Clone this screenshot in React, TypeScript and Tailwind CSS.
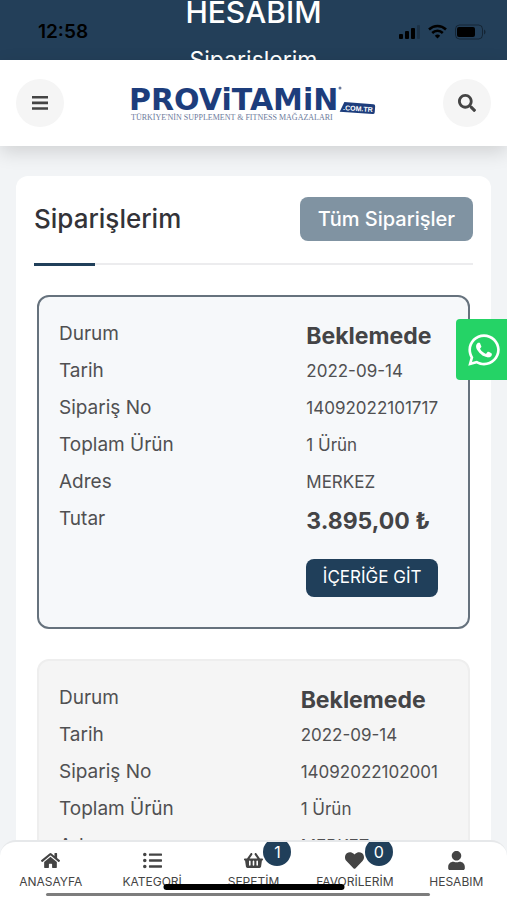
import { useState } from "react";
import { FaHeart, FaHome, FaListUl, FaSearch, FaShoppingBasket, FaUser, FaWhatsapp } from "react-icons/fa";
import type { IconType } from "react-icons";

interface Order {
  no: string;
  status: string;
  date: string;
  count: string;
  address: string;
  total: string;
  active?: boolean;
}

const ORDERS: Order[] = [
  {
    no: "14092022101717",
    status: "Beklemede",
    date: "2022-09-14",
    count: "1 Ürün",
    address: "MERKEZ",
    total: "3.895,00 ₺",
    active: true,
  },
  {
    no: "14092022102001",
    status: "Beklemede",
    date: "2022-09-14",
    count: "1 Ürün",
    address: "MERKEZ",
    total: "3.895,00 ₺",
  },
];

interface Tab {
  label: string;
  icon: IconType;
  badge?: number;
}

const TABS: Tab[] = [
  { label: "ANASAYFA", icon: FaHome },
  { label: "KATEGORİ", icon: FaListUl },
  { label: "SEPETİM", icon: FaShoppingBasket, badge: 1 },
  { label: "FAVORİLERİM", icon: FaHeart, badge: 0 },
  { label: "HESABIM", icon: FaUser },
];

function StatusBar() {
  return (
    <div className="absolute inset-x-0 top-0 flex items-center justify-between pt-5 pl-[38px] pr-[21px] text-black">
      <span className="text-[19px] leading-6 font-semibold">12:58</span>
      <div className="flex items-center gap-2">
        <svg width="21" height="16" viewBox="0 0 21 16" aria-hidden="true">
          <rect x="0" y="10" width="4" height="5" rx="1" />
          <rect x="6" y="7" width="4" height="8" rx="1" />
          <rect x="12" y="4" width="4" height="11" rx="1" />
          <rect x="18" y="1" width="3" height="14" rx="1" opacity=".2" />
        </svg>
        <svg width="19" height="16" viewBox="0 0 19 16" fill="none" stroke="currentColor" strokeWidth="2.5" aria-hidden="true">
          <path d="M1 5.500C5.800.9 13.200.9 18 5.500" />
          <path d="M4.200 9c3-2.900 7.600-2.900 10.600 0" />
          <path d="M9.500 14.500 6.800 11.800a3.900 3.900 0 0 1 5.400 0z" fill="currentColor" stroke="none" />
        </svg>
        <svg width="31" height="16" viewBox="0 0 31 16" aria-hidden="true">
          <rect x=".5" y="1" width="27" height="14" rx="4" fill="none" stroke="#000" strokeOpacity=".4" />
          <rect x="2" y="3" width="18" height="10" rx="2" />
          <path d="M29 5.500c2 .8 2 4.200 0 5z" opacity=".4" />
        </svg>
      </div>
    </div>
  );
}

function Logo() {
  return (
    <svg width="248" height="40" viewBox="0 0 248 40" role="img" aria-label="Provitamin">
      <text x="-1" y="27" fill="#1d3d7c" fontFamily="DejaVu Sans" fontWeight="700" fontSize="30">
        PROViTAMiN
      </text>
      <text x="1" y="37" fill="#6b7a9b" fontFamily="Liberation Serif" fontSize="8">
        TÜRKİYE'NİN SUPPLEMENT &amp; FITNESS MAĞAZALARI
      </text>
      <circle cx="210" cy="5" r="1.500" fill="#6b7a9b" />
      <g transform="rotate(4 227 25)">
        <path d="M214 20h29q2 0 2 2v6q0 2-2 2h-33z" fill="#1d3d7c" />
        <text x="228" y="28" fill="#fff" textAnchor="middle" fontFamily="Liberation Sans" fontWeight="700" fontSize="7">
          .COM.TR
        </text>
      </g>
    </svg>
  );
}

function OrderCard({ order }: { order: Order }) {
  const rows = [
    { label: "Durum", value: order.status, strong: true },
    { label: "Tarih", value: order.date },
    { label: "Sipariş No", value: order.no },
    { label: "Toplam Ürün", value: order.count },
    { label: "Adres", value: order.address },
    { label: "Tutar", value: order.total, strong: true },
  ];

  return (
    <article
      className={`rounded-xl pt-[18px] pb-[30px] pl-5 pr-[30px] ${
        order.active ? "border-2 border-[#66727d] bg-[#f6f8fa]" : "border-2 border-[#eeeeee] bg-[#f5f5f5]"
      }`}
    >
      <table className="w-full text-[#505052]">
        <tbody>
          {rows.map((row) => (
            <tr key={row.label} className="h-[37px]">
              <th scope="row" className="p-0 text-left text-[19px] leading-7 font-normal">
                {row.label}
              </th>
              <td
                className={`w-px p-0 whitespace-nowrap leading-7 ${
                  row.strong ? "pt-1 text-[23px] font-bold text-[#444446]" : "text-[17px]"
                }`}
              >
                {row.value}
              </td>
            </tr>
          ))}
          <tr>
            <td />
            <td className="p-0 pt-[22px]">
              <button type="button" className="h-[38px] w-full rounded-lg bg-[#203f5a] text-[17px] text-white">
                İÇERİĞE GİT
              </button>
            </td>
          </tr>
        </tbody>
      </table>
    </article>
  );
}

export default function App() {
  const [current, setCurrent] = useState("HESABIM");

  return (
    <div className="relative flex h-screen flex-col overflow-hidden bg-[#f2f4f6] font-['Inter',sans-serif]">
      {/* Hero, scrolled up under the header */}
      <div className="relative h-[60px] shrink-0 overflow-hidden bg-[#233f59] text-center text-white">
        <h1 className="-mt-2 text-[30px] leading-10 font-medium">HESABIM</h1>
        <p className="mt-3 text-[23px] leading-8">Siparişlerim</p>
        <StatusBar />
      </div>

      <header className="z-10 flex h-[86px] shrink-0 items-center justify-between bg-white px-4 shadow-[0_6px_18px_rgba(0,0,0,0.14)]">
        <button type="button" aria-label="Menü" className="flex size-12 items-center justify-center rounded-full bg-[#f5f5f5] text-[#444]">
          <svg width="16" height="14" viewBox="0 0 16 14" fill="currentColor" aria-hidden="true">
            <path d="M0 0h16v2.600H0zM0 5.600h16v2.600H0zM0 11.200h16v2.600H0z" />
          </svg>
        </button>
        <Logo />
        <button type="button" aria-label="Ara" className="flex size-12 items-center justify-center rounded-full bg-[#f5f5f5] text-[#444]">
          <FaSearch size={18} />
        </button>
      </header>

      <main className="min-h-0 flex-1 overflow-hidden px-4 pt-[30px]">
        <section className="rounded-xl bg-white px-[18px] pt-[21px]">
          <div className="flex items-center justify-between border-b-2 border-[#ececee] pb-[22px]">
            <h2 className="text-[26px] leading-9 font-medium text-[#333338]">Siparişlerim</h2>
            <button type="button" className="h-11 rounded-lg bg-[#8093a2] px-[18px] text-xl font-medium text-white">
              Tüm Siparişler
            </button>
          </div>
          <div className="-mt-0.5 h-[3px] w-[61px] bg-[#203f5a]" />

          <div className="flex flex-col gap-[30px] px-[3px] pt-[29px] pb-8">
            {ORDERS.map((order) => (
              <OrderCard key={order.no} order={order} />
            ))}
          </div>
        </section>
      </main>

      <a
        href="#whatsapp"
        aria-label="WhatsApp"
        className="absolute top-[319px] right-0 flex h-[61px] w-[51px] items-center justify-center rounded-l bg-[#25d366] pl-1 text-white"
      >
        <FaWhatsapp size={36} />
      </a>

      <nav className="relative z-10 grid h-[60px] shrink-0 grid-cols-5 overflow-hidden rounded-t-2xl border-t-2 border-[#e6e8ea] bg-white text-[#444]">
        {TABS.map(({ label, icon: Icon, badge }) => (
          <button
            key={label}
            type="button"
            aria-current={current === label ? "page" : undefined}
            onClick={() => setCurrent(label)}
            className="relative flex flex-col items-center pt-[9px] text-xs leading-4"
          >
            <Icon size={19} />
            <span className="mt-1">{label}</span>
            {badge !== undefined && (
              <span className="absolute -top-1 left-1/2 ml-2.5 flex size-7 items-center justify-center rounded-full bg-[#203f5a] text-base text-white">
                {badge}
              </span>
            )}
          </button>
        ))}
      </nav>

      {/* Scroll bar and home indicator */}
      <div className="absolute bottom-1 left-[46px] z-20 h-[3px] w-[384px] rounded-full bg-[#7d7d7d]" />
      <div className="absolute bottom-2.5 left-1/2 z-20 h-1.5 w-[181px] -translate-x-1/2 rounded-full bg-black" />
    </div>
  );
}
